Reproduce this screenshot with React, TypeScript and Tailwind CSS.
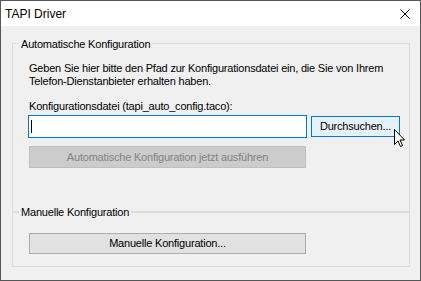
import React from 'react';

function Cursor() {
  return (
    <svg width="13" height="20" viewBox="0 0 13 20" className="absolute left-[392px] top-[127px]">
      <path
        d="M1.5 1.5 L1.5 16.5 L5 13 L7.5 18.5 L9.5 17.5 L7 12 L11.5 12 Z"
        fill="#ffffff"
        stroke="#000000"
        strokeWidth="1"
        strokeLinejoin="miter"
      />
    </svg>
  );
}

export default function App() {
  return (
    <div className="relative w-[421px] h-[281px] border border-[#565656] bg-[#f0f0f0] flex flex-col font-['Liberation_Sans',Arial,sans-serif] text-[11px] leading-[13px] text-black">
      {/* Title bar */}
      <div className="h-[25px] bg-white flex items-center justify-between pl-[4px] pr-[10px]">
        <span className="text-[12px] leading-[16px]">TAPI Driver</span>
        <svg width="10" height="10" viewBox="0 0 10 10">
          <path d="M0.5 0.5 L9.5 9.5 M9.5 0.5 L0.5 9.5" stroke="#000" strokeWidth="1" />
        </svg>
      </div>

      <div className="flex-1 pl-[11px] pr-[10px] pt-[17px] flex flex-col tracking-[-0.2px]">
        {/* Automatische Konfiguration */}
        <div className="h-[169px] border border-[#dcdcdc] flex flex-col">
          <span className="self-start -mt-[6px] ml-[6px] px-[2px] bg-[#f0f0f0]">Automatische Konfiguration</span>
          <div className="pl-[15px] flex flex-col">
            <p className="ml-[1px] mt-[11px]">
              Geben Sie hier bitte den Pfad zur Konfigurationsdatei ein, die Sie von Ihrem
              <br />
              Telefon-Dienstanbieter erhalten haben.
            </p>
            <div className="ml-[1px] mt-[12px]">Konfigurationsdatei (tapi_auto_config.taco):</div>
            <div className="flex items-start gap-[4px] mt-[2px]">
              <div className="w-[279px] h-[23px] border border-[#0078d7] bg-white flex items-center pl-[2px]">
                <span className="w-[1px] h-[13px] bg-black" />
              </div>
              <button className="w-[89px] h-[21px] mt-[1px] border border-[#0078d7] bg-[#e5f1fb] text-center">
                Durchsuchen...
              </button>
            </div>
            <button
              disabled
              className="ml-[1px] mt-[8px] w-[277px] h-[22px] border border-[#bfbfbf] bg-[#cccccc] text-[#838383] text-center"
            >
              Automatische Konfiguration jetzt ausführen
            </button>
          </div>
        </div>

        {/* Manuelle Konfiguration */}
        <div className="h-[55px] border border-[#dcdcdc] flex flex-col">
          <span className="self-start -mt-[7px] ml-[6px] px-[2px] bg-[#f0f0f0]">Manuelle Konfiguration</span>
          <div className="pl-[16px]">
            <button className="mt-[14px] w-[277px] h-[21px] border border-[#adadad] bg-[#e1e1e1] text-center">
              Manuelle Konfiguration...
            </button>
          </div>
        </div>
      </div>

      <Cursor />
    </div>
  );
}
